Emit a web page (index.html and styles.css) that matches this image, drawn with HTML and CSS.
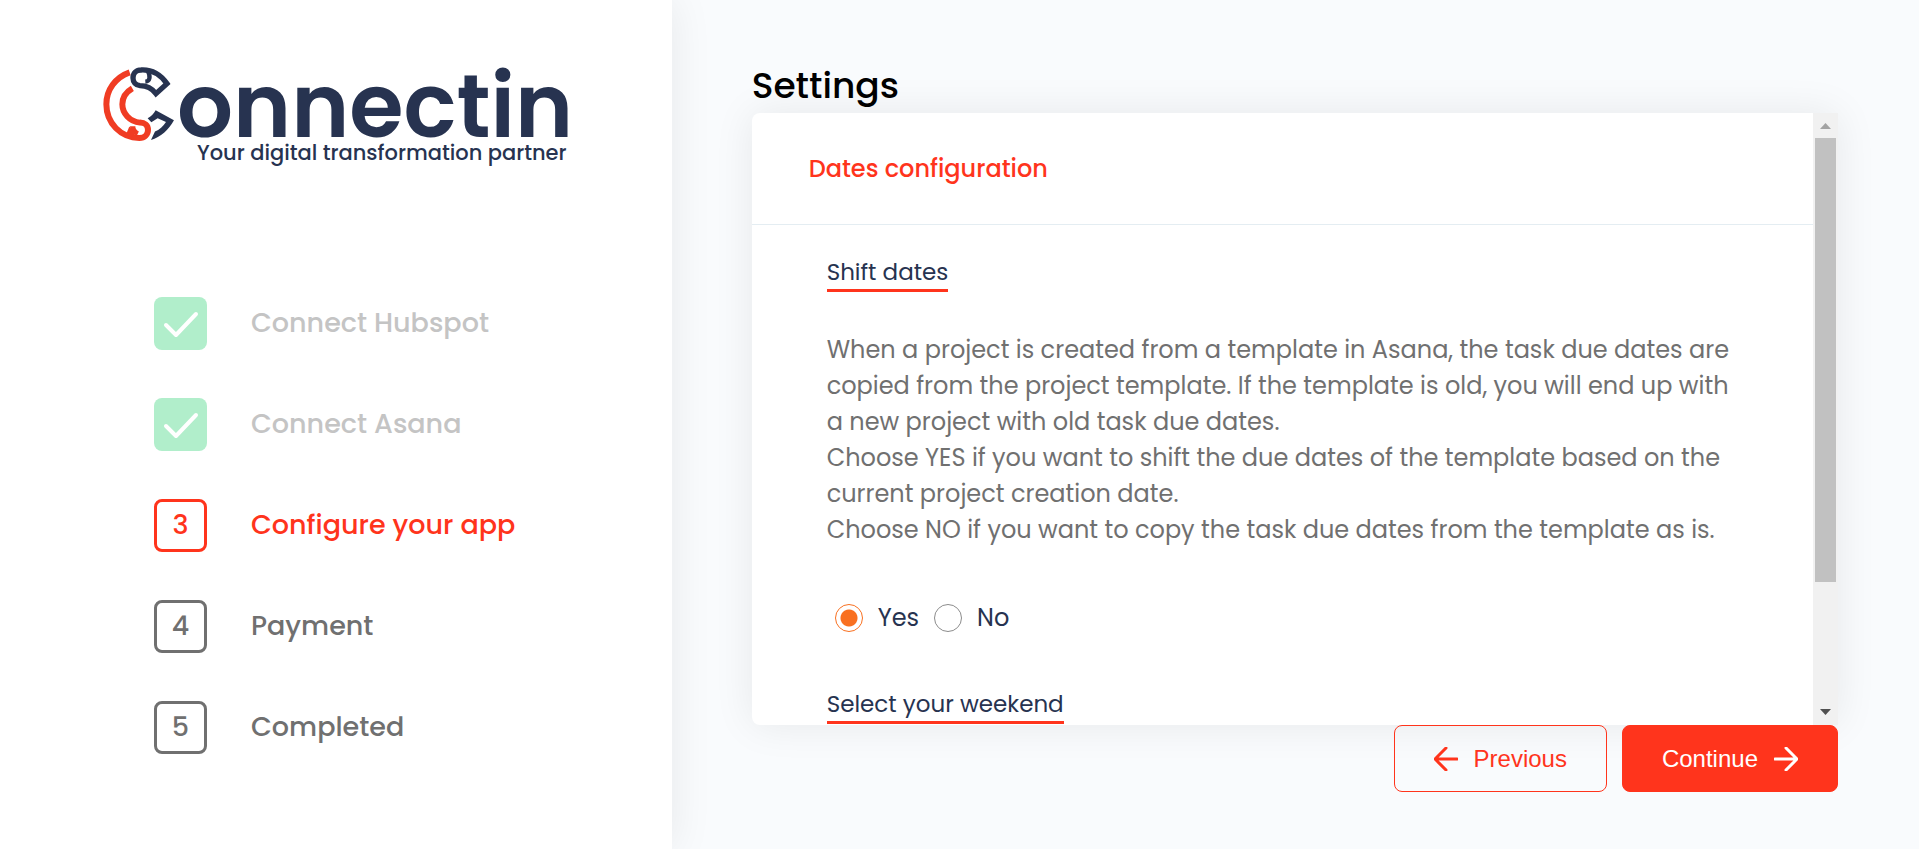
FILE: index.html
```
<!DOCTYPE html>
<html lang="en">
<head>
    <meta charset="UTF-8">
    <meta name="viewport" content="width=device-width, initial-scale=1.0">
    <title>Connectin - Settings</title>
    <link rel="stylesheet" href="styles.css">
</head>
<body>
    <aside class="sidebar">
        <svg class="logo" viewBox="0 0 468 104" role="img" aria-label="Connectin">
            <!-- hook mark -->
            <g transform="translate(-12 -15) scale(0.33333)">
                <g fill="none" stroke="#f03c23" stroke-width="18">
                    <path d="M119 67C76 82 49 120 49 163C49 220 93 264 148 264C164 264 174 253 174 240C174 226 164 218 150 218C119 215 97 190 97 163C97 143 108 126 127 115"/>
                    <path d="M128 229C128 240 131 246 143 252" stroke-width="16"/>
                </g>
                <path fill="#f03c23" d="M118 230L136 250L126 262L108 254Z"/>
                <g fill="none" stroke="#273350" stroke-width="16">
                    <path d="M153 60C185 58 213 76 231 101L198 131C186 115 168 107 150 107C137 106 129 96 129 84C129 70 139 60 153 60Z"/>
                    <path d="M166 95C180 94 182 80 174 64" stroke-width="13"/>
                </g>
                <path fill="#273350" d="M197 181L252 211C236 240 212 262 183 270L195 245C208 240 220 228 228 216L203 205L184 217L173 205C183 200 191 192 197 181Z"/>
            </g>
            <text class="logo-name" x="75" y="72">onnectin</text>
            <text class="logo-tagline" x="465" y="95" text-anchor="end">Your digital transformation partner</text>
        </svg>
        <ol class="steps">
            <li class="step done">
                <span class="step-box"><svg viewBox="0 0 53 53"><path d="M12 28L22 38L42 17"/></svg></span>
                Connect Hubspot
            </li>
            <li class="step done">
                <span class="step-box"><svg viewBox="0 0 53 53"><path d="M12 28L22 38L42 17"/></svg></span>
                Connect Asana
            </li>
            <li class="step active"><span class="step-box">3</span>Configure your app</li>
            <li class="step"><span class="step-box">4</span>Payment</li>
            <li class="step"><span class="step-box">5</span>Completed</li>
        </ol>
    </aside>

    <main class="content">
        <h1>Settings</h1>
        <div class="panel">
            <div class="panel-scroll">
                <h2>Dates configuration</h2>
                <div class="panel-body">
                    <h3>Shift dates</h3>
                    <p>
                        When a project is created from a template in Asana, the task due dates are copied from the project template. If the template is old, you will end up with a new project with old task due dates.<br>
                        Choose YES if you want to shift the due dates of the template based on the current project creation date.<br>
                        Choose NO if you want to copy the task due dates from the template as is.
                    </p>
                    <div class="radio-group">
                        <input type="radio" id="shiftYes" name="shift" checked>
                        <label for="shiftYes">Yes</label>
                        <input type="radio" id="shiftNo" name="shift">
                        <label for="shiftNo">No</label>
                    </div>
                    <h3>Select your weekend</h3>
                </div>
            </div>
            <div class="scrollbar" aria-hidden="true">
                <svg class="scroll-up" viewBox="0 0 25 25"><path d="M7 16L12.5 10L18 16Z"/></svg>
                <div class="scroll-track"><div class="scroll-thumb"></div></div>
                <svg class="scroll-down" viewBox="0 0 25 25"><path d="M7 9L12.5 15L18 9Z"/></svg>
            </div>
        </div>
        <div class="buttons">
            <button type="button" class="btn-previous">
                <svg viewBox="0 0 24 24"><path d="M23 12H2M12 1L1 12L12 23"/></svg>
                Previous
            </button>
            <button type="button" class="btn-continue">
                Continue
                <svg viewBox="0 0 24 24"><path d="M1 12H22M12 1L23 12L12 23"/></svg>
            </button>
        </div>
    </main>
</body>
</html>
```
FILE: styles.css
```
* {
    box-sizing: border-box;
}
body {
    font-family: Poppins, Inter, sans-serif;
    display: flex;
    min-height: 100vh;
    margin: 0;
    background-color: #f9fbfd;
    color: #273350;
}
h1, h2, h3 {
    margin: 0;
    font-weight: 500;
}

/* Sidebar */
.sidebar {
    width: 35%;
    padding: 65px 102px 0;
    background-color: #ffffff;
    box-shadow: 0 0 40px rgba(0, 0, 0, 0.08);
}
.logo {
    display: block;
    width: 100%;
    max-width: 468px;
    overflow: visible;
    fill: #273350;
}
.logo-name {
    font-size: 88px;
    font-weight: 600;
}
.logo-tagline {
    font-size: 21px;
    font-weight: 500;
}
.steps {
    display: flex;
    flex-direction: column;
    gap: 48px;
    margin: 128px 0 0;
    padding: 0 0 0 52px;
    list-style: none;
}
.step {
    display: flex;
    align-items: center;
    gap: 44px;
    font-size: 27px;
    font-weight: 500;
    color: #707070;
}
.step-box {
    display: flex;
    align-items: center;
    justify-content: center;
    width: 53px;
    height: 53px;
    border: 3px solid currentColor;
    border-radius: 8px;
}
.step-box svg {
    width: 53px;
    flex-shrink: 0;
    fill: none;
    stroke: #ffffff;
    stroke-width: 4;
    stroke-linecap: round;
    stroke-linejoin: round;
}
.done {
    color: #c4c4c4;
}
.done .step-box {
    border: none;
    background-color: #b1eecb;
}
.active {
    color: #ff341c;
}

/* Settings */
.content {
    flex: 1;
    padding: 59px 81px 57px 80px;
}
h1 {
    font-size: 36px;
    line-height: 54px;
    color: #000000;
}
.panel {
    display: flex;
    height: calc(100vh - 237px);
    background-color: #ffffff;
    border-radius: 8px;
    box-shadow: 0 0 40px rgba(0, 0, 0, 0.08);
}
.panel-scroll {
    flex: 1;
    overflow-y: auto;
    scrollbar-width: none;
}
.scrollbar {
    display: flex;
    flex-direction: column;
    width: 25px;
    background-color: #f1f1f1;
}
.scrollbar svg {
    height: 25px;
}
.scroll-up {
    fill: #a3a3a3;
}
.scroll-down {
    fill: #505050;
}
.scroll-track {
    flex: 1;
    padding: 0 2px;
}
.scroll-thumb {
    height: 79%;
    background-color: #c1c1c1;
}
h2 {
    padding: 38px 57px;
    border-bottom: 1px solid #e4edf2;
    font-size: 24px;
    line-height: 35px;
    color: #ff341c;
}
.panel-body {
    padding: 31px 75px 160px;
}
h3 {
    width: fit-content;
    border-bottom: 3px solid #ff341c;
    font-size: 23px;
    font-weight: 400;
    line-height: 33px;
}
.panel-body p {
    margin: 40px 0 52px;
    font-size: 24px;
    line-height: 36px;
    color: #707070;
}
.radio-group {
    display: flex;
    align-items: center;
    margin-bottom: 52px;
    padding-left: 8px;
    font-size: 24px;
    line-height: 36px;
}
.radio-group input {
    appearance: none;
    width: 28px;
    height: 28px;
    margin: 0 15px 0 0;
    border: 1px solid #8c8c8c;
    border-radius: 50%;
}
.radio-group input:checked {
    border-color: #f97020;
    background: radial-gradient(circle, #f97020 8px, transparent 9px);
}
.radio-group label {
    margin-right: 15px;
}

/* Buttons */
.buttons {
    display: flex;
    justify-content: flex-end;
    gap: 15px;
}
button {
    display: flex;
    align-items: center;
    gap: 16px;
    height: 67px;
    padding: 0 39px;
    border: 1px solid #ff341c;
    border-radius: 8px;
    font-family: Arial, "Liberation Sans", sans-serif;
    font-size: 24px;
    cursor: pointer;
}
button svg {
    width: 24px;
    height: 24px;
    fill: none;
    stroke: currentColor;
    stroke-width: 3;
    stroke-linecap: round;
    stroke-linejoin: round;
}
.btn-previous {
    background-color: transparent;
    color: #ff341c;
}
.btn-continue {
    background-color: #ff341c;
    color: #ffffff;
}
```
